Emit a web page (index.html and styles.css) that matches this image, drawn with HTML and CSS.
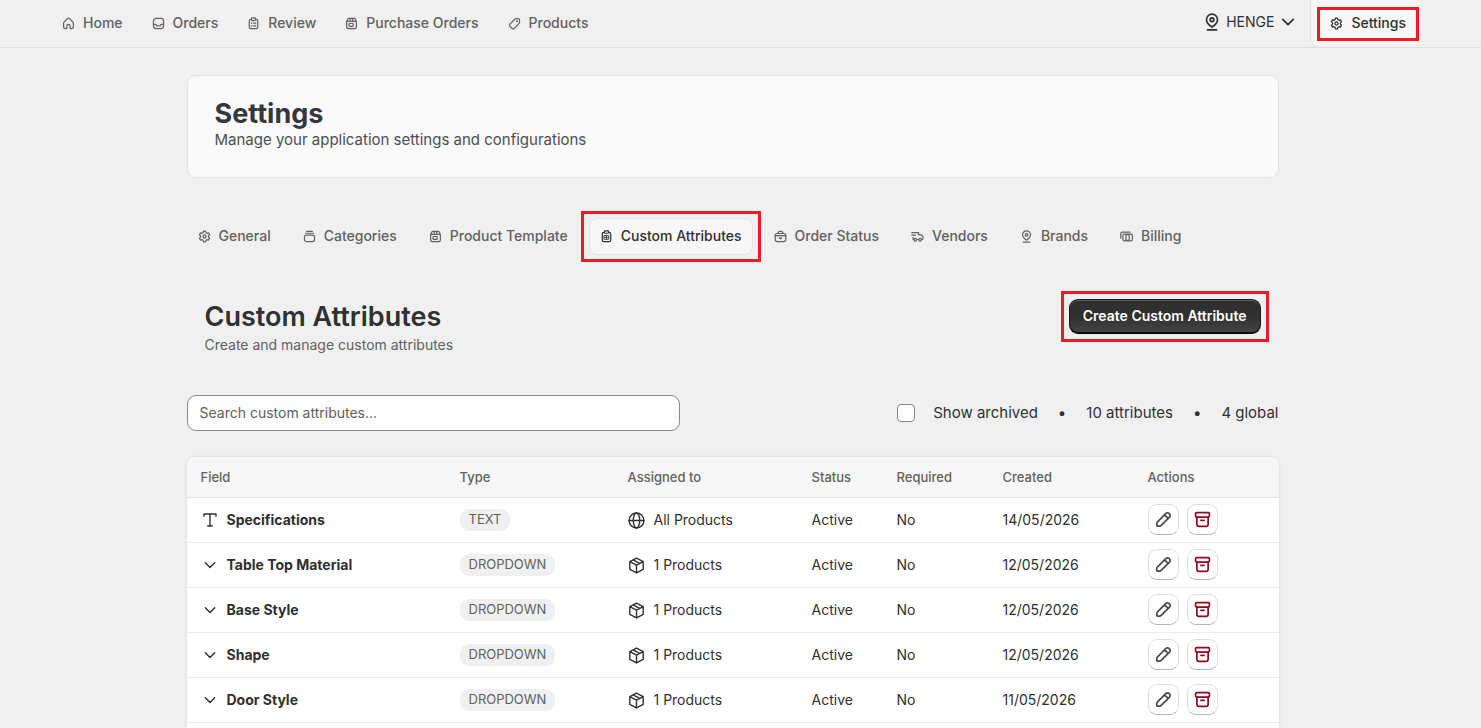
FILE: index.html
```html
<!DOCTYPE html>
<html lang="en">
<head>
  <meta charset="utf-8">
  <title>Settings</title>
  <link rel="stylesheet" href="styles.css">
</head>
<body>
  <svg class="sprite" aria-hidden="true">
    <symbol id="i-home" viewBox="0 0 16 16"><path d="M2 7.800c0-.8.3-1.500.9-2L6.700 2c.7-.7 1.900-.7 2.600 0l3.800 3.800c.6.5.9 1.200.9 2v4.400c0 1.100-.9 2-2 2h-1.200c-.5 0-.8-.3-.8-.8v-2.200a2 2 0 0 0-4 0v2.200c0 .5-.3.8-.8.8H4c-1.100 0-2-.9-2-2z"/></symbol>
    <symbol id="i-orders" viewBox="0 0 16 16"><rect x="1.800" y="1.800" width="12.400" height="12.400" rx="3"/><path d="M2 9h2.800l1.200 2h4l1.200-2H14"/></symbol>
    <symbol id="i-clip" viewBox="0 0 16 16"><path d="M5.500 2.800H4.800a2 2 0 0 0-2 2v7.400a2 2 0 0 0 2 2h6.400a2 2 0 0 0 2-2V4.800a2 2 0 0 0-2-2h-.7"/><rect x="5.500" y="1.200" width="5" height="3.200" rx="1"/><path d="M5.300 7.500h.8M5.300 10.800h.8M8 7.500h2.800M8 10.800h2.800"/></symbol>
    <symbol id="i-store" viewBox="0 0 16 16"><path d="M2 5.500v6.700a2 2 0 0 0 2 2h8a2 2 0 0 0 2-2V5.500l-1.300-2.700a1.800 1.800 0 0 0-1.600-1H4.900a1.800 1.800 0 0 0-1.600 1zM2 5.500h12M6.500 2v3.500M9.500 2v3.500"/><rect x="5" y="8" width="5" height="3.500" rx=".5"/></symbol>
    <symbol id="i-tag" viewBox="0 0 16 16"><path d="M8.600 2.500 2.400 8.700a1.800 1.800 0 0 0 0 2.500l2.900 2.900a1.800 1.800 0 0 0 2.500 0l5.800-6.200c.4-.4.6-.8.6-1.300V4a2 2 0 0 0-2-2H9.900c-.5 0-.9.200-1.300.5z"/><circle cx="11" cy="5.200" r=".5"/></symbol>
    <symbol id="i-gear" viewBox="0 0 16 16"><path d="M6.700 1.500h2.600l.5 1.900 1.200.7 1.900-.6 1.300 2.300-1.400 1.400v1.600l1.400 1.400-1.300 2.300-1.900-.6-1.200.7-.5 1.900H6.700l-.5-1.900-1.200-.7-1.900.6-1.300-2.300 1.400-1.400V7.200L1.800 5.800l1.300-2.300 1.900.6 1.200-.7z"/><circle cx="8" cy="8" r="1.900"/></symbol>
    <symbol id="i-stack" viewBox="0 0 16 16"><rect x="1.800" y="6.300" width="12.400" height="7.900" rx="2.500"/><path d="M3 4h10M4.500 1.800h7"/></symbol>
    <symbol id="i-list" viewBox="0 0 16 16"><path d="M5.500 2.800H4.800a2 2 0 0 0-2 2v7.400a2 2 0 0 0 2 2h6.400a2 2 0 0 0 2-2V4.800a2 2 0 0 0-2-2h-.7"/><rect x="5.500" y="1.200" width="5" height="2.800" rx="1"/><path stroke-width="1" d="M5.300 6.800h5.400v4.700H5.300zM8 6.800v4.700M5.300 9.100h5.400"/></symbol>
    <symbol id="i-case" viewBox="0 0 16 16"><rect x="1.500" y="4.300" width="13" height="9.900" rx="2.500"/><path d="M5 4.300c0-1.500 1.100-2.500 2.500-2.500h1c1.400 0 2.500 1 2.500 2.500M1.500 7h13M6.500 9.500 8 10.800l1.500-1.300"/></symbol>
    <symbol id="i-truck" viewBox="0 0 16 16"><path d="M1 3.300h8.300v2.400h2.500c.5 0 .9.200 1.200.6l1.700 2.200v2.300c0 .5-.4.900-.9.900h-.7M9 11.700H7.200M3.200 11.700H2.500V9.500M1 6.200h4.500"/><circle cx="5.200" cy="12" r="1.600"/><circle cx="11.200" cy="12" r="1.600"/></symbol>
    <symbol id="i-pin" viewBox="0 0 16 16"><path d="M8 12.500c2.500-1.700 4.900-4 4.900-6.600a4.900 4.900 0 0 0-9.800 0c0 2.600 2.400 4.900 4.900 6.600zM4 15h8"/><circle cx="8" cy="6" r="1.600"/></symbol>
    <symbol id="i-cash" viewBox="0 0 16 16"><rect x="3.500" y="5" width="11.700" height="8.500" rx="2"/><path d="M1 10V4.500a2 2 0 0 1 2-2h9.500"/><rect x="7.300" y="5.800" width="4" height="7" rx="1.500"/></symbol>
    <symbol id="i-down" viewBox="0 0 16 16"><path d="m3.300 5.700 4.700 4.700 4.700-4.700"/></symbol>
    <symbol id="i-text" viewBox="0 0 16 16"><path d="M2 4.200V2h12v2.200M8 2v12M5.700 14h4.600"/></symbol>
    <symbol id="i-globe" viewBox="0 0 16 16"><circle cx="8" cy="8" r="7"/><ellipse cx="8" cy="8" rx="3" ry="7"/><path d="M1 8h14"/></symbol>
    <symbol id="i-box" viewBox="0 0 16 16"><path d="M8 1 14.300 4.300v7.400L8 15l-6.300-3.300V4.300zM1.700 4.300 8 7.600l6.300-3.300M8 7.600V15M4.800 2.700l6.200 3.300"/></symbol>
    <symbol id="i-edit" viewBox="0 0 16 16"><path d="m2.400 10.200 7.900-7.900a2 2 0 0 1 2.900 0l.5.500a2 2 0 0 1 0 2.900l-7.900 7.900c-.4.400-.8.600-1.300.6H2.300a.6.600 0 0 1-.6-.6v-1.800c0-.6.200-1.200.7-1.600zM9 3.600 12.400 7"/></symbol>
    <symbol id="i-archive" viewBox="0 0 16 16"><rect x="1.500" y="1.500" width="13" height="4.200" rx=".9"/><path d="M2.700 5.700v6.800c0 1 .8 1.900 1.900 1.900h6.800c1.100 0 1.900-.9 1.900-1.900V5.700M6.500 8.800h3"/></symbol>
  </svg>

  <header class="topbar">
    <nav class="main-nav">
      <a href="#"><svg><use href="#i-home"/></svg>Home</a>
      <a href="#"><svg><use href="#i-orders"/></svg>Orders</a>
      <a href="#"><svg><use href="#i-clip"/></svg>Review</a>
      <a href="#"><svg><use href="#i-store"/></svg>Purchase Orders</a>
      <a href="#"><svg><use href="#i-tag"/></svg>Products</a>
    </nav>
    <button type="button" class="store-switch"><svg class="store-pin"><use href="#i-pin"/></svg>HENGE<svg class="store-arrow"><use href="#i-down"/></svg></button>
    <a href="#" class="settings-link marked"><svg><use href="#i-gear"/></svg>Settings</a>
  </header>

  <main class="page">
    <section class="banner">
      <h1>Settings</h1>
      <p>Manage your application settings and configurations</p>
    </section>

    <nav class="tabs">
      <a href="#"><svg><use href="#i-gear"/></svg>General</a>
      <a href="#"><svg><use href="#i-stack"/></svg>Categories</a>
      <a href="#"><svg><use href="#i-store"/></svg>Product Template</a>
      <a href="#" class="active marked"><svg><use href="#i-list"/></svg>Custom Attributes</a>
      <a href="#"><svg><use href="#i-case"/></svg>Order Status</a>
      <a href="#"><svg><use href="#i-truck"/></svg>Vendors</a>
      <a href="#"><svg><use href="#i-pin"/></svg>Brands</a>
      <a href="#"><svg><use href="#i-cash"/></svg>Billing</a>
    </nav>

    <section class="section-head">
      <div>
        <h2>Custom Attributes</h2>
        <p>Create and manage custom attributes</p>
      </div>
      <button type="button" class="create-btn marked">Create Custom Attribute</button>
    </section>

    <div class="filters">
      <input type="text" class="search" placeholder="Search custom attributes..." aria-label="Search custom attributes">
      <div class="summary">
        <label class="archived"><input type="checkbox">Show archived</label>
        <span>•</span>
        <span>10 attributes</span>
        <span>•</span>
        <span>4 global</span>
      </div>
    </div>

    <div class="card">
      <table>
        <colgroup>
          <col>
          <col class="col-type">
          <col class="col-assigned">
          <col class="col-status">
          <col class="col-required">
          <col class="col-created">
          <col class="col-actions">
        </colgroup>
        <thead>
          <tr><th>Field</th><th>Type</th><th>Assigned to</th><th>Status</th><th>Required</th><th>Created</th><th>Actions</th></tr>
        </thead>
        <tbody id="rows"></tbody>
      </table>
    </div>
  </main>
  <script src="script.js"></script>
</body>
</html>
```
FILE: styles.css
```css
* {
  box-sizing: border-box;
}

body {
  margin: 0;
  min-height: 100vh;
  display: flex;
  flex-direction: column;
  background: #f0f0f0;
  color: #303030;
  font-family: Inter, "Liberation Sans", sans-serif;
  font-size: 15px;
  line-height: 20px;
}

h1, h2, p {
  margin: 0;
}

a {
  color: inherit;
  text-decoration: none;
}

button, input {
  font: inherit;
  color: inherit;
}

svg {
  width: 13px;
  height: 13px;
  flex: none;
  fill: none;
  stroke: currentColor;
  stroke-width: 1.5;
  stroke-linecap: round;
  stroke-linejoin: round;
}

.sprite {
  position: absolute;
  width: 0;
  height: 0;
}

/* red frame round the highlighted controls */
.marked {
  position: relative;
}

.marked::after {
  content: "";
  position: absolute;
  inset: -9px;
  border: 3px solid #ed1c24;
  pointer-events: none;
}

/* top bar */
.topbar {
  display: flex;
  align-items: flex-start;
  height: 48px;
  padding: 0 62px;
  border-bottom: 1px solid #e0e0e0;
}

.main-nav {
  display: flex;
  gap: 29px;
  margin-right: auto;
}

.main-nav a, .tabs a, .settings-link {
  display: flex;
  align-items: center;
  gap: 8px;
  font-size: 14px;
  font-weight: 500;
  color: #616161;
}

.main-nav a, .settings-link {
  height: 46px;
}

.store-switch {
  display: flex;
  align-items: center;
  gap: 5px;
  height: 44px;
  padding: 0;
  margin-right: 13px;
  border: 0;
  background: none;
  font-size: 14px;
}

.store-pin {
  width: 18px;
  height: 18px;
}

.store-arrow {
  width: 18px;
  height: 18px;
}

.settings-link {
  padding: 0 13px 0 19px;
  border-left: 1px solid #e3e3e3;
  border-radius: 0 0 8px 8px;
  background: #f7f7f7;
  color: #303030;
}

.settings-link::after {
  inset: 7px 0 5px 6px;
}

/* page */
.page {
  flex: 1;
  display: flex;
  flex-direction: column;
  width: 100%;
  max-width: 1124px;
  margin: 0 auto;
  padding: 27px 24px 0 8px;
}

.banner {
  height: 103px;
  padding: 22px 27px;
  border: 1px solid #e3e3e3;
  border-radius: 9px;
  background: #fafafa;
  color: #4a4f55;
}

h1, h2 {
  font-size: 27px;
  line-height: 32px;
  font-weight: 700;
  color: #303030;
}

.banner h1 {
  color: #34383e;
}

.tabs {
  display: flex;
  gap: 10px;
  margin-top: 40px;
}

.tabs a {
  height: 37px;
  padding: 0 10px 1px;
  border: 1px solid transparent;
  border-radius: 8px;
}

.tabs .active {
  border-color: #e3e3e3;
  background: #f7f7f7;
  color: #303030;
}

.tabs .active::after {
  inset: -8px -9px;
}

.section-head {
  display: flex;
  justify-content: space-between;
  align-items: flex-start;
  margin-top: 44px;
  padding: 0 18px;
}

.section-head h2 {
  margin-top: 2px;
  font-weight: 600;
}

.section-head p {
  margin-top: 2px;
  font-size: 14px;
  color: #616161;
}

.create-btn {
  height: 35px;
  padding: 0 13px 2px;
  border: 1px solid #1a1a1a;
  border-bottom-color: #000;
  border-radius: 9px;
  background: linear-gradient(#303030 50%, #454545);
  box-shadow: inset 0 1px 0 #5e5e5e, inset 0 -1px 0 #111;
  color: #fff;
  font-size: 14px;
  font-weight: 600;
}

.filters {
  display: flex;
  justify-content: space-between;
  align-items: center;
  margin-top: 40px;
}

.search {
  width: 493px;
  height: 36px;
  padding: 0 12px 1px;
  border: 1px solid #8a8a8a;
  border-radius: 9px;
  background: #fdfdfd;
  font-size: 14px;
}

.search::placeholder {
  color: #616161;
  opacity: 1;
}

.summary {
  display: flex;
  align-items: center;
  gap: 20px;
}

.archived {
  display: flex;
  align-items: center;
  gap: 18px;
}

.archived input {
  appearance: none;
  width: 18px;
  height: 18px;
  margin: 0;
  border: 1px solid #8a8a8a;
  border-radius: 4px;
  background: #fdfdfd;
}

/* table */
.card {
  flex: 1;
  margin-top: 26px;
  border-radius: 8px 8px 0 0;
  background: #fff;
  box-shadow: 0 0 3px rgba(0, 0, 0, 0.12);
  overflow: hidden;
}

table {
  width: 100%;
  table-layout: fixed;
  border-collapse: separate;
  border-spacing: 0;
  font-size: 14px;
}

.col-type {
  width: 168px;
}

.col-assigned {
  width: 184px;
}

.col-status {
  width: 85px;
}

.col-required {
  width: 106px;
}

.col-created {
  width: 145px;
}

.col-actions {
  width: 145px;
}

th, td {
  height: 45px;
  padding: 0 0 0 14px;
  border-bottom: 1px solid #ebebeb;
  text-align: left;
}

th {
  height: 41px;
  border-color: #e3e3e3;
  background: #f7f7f7;
  color: #616161;
  font-size: 13px;
  font-weight: 500;
}

.cell {
  display: flex;
  align-items: center;
  gap: 9px;
}

.cell svg {
  width: 17px;
  height: 17px;
  stroke-width: 1.3;
}

.actions {
  gap: 8px;
  padding-bottom: 1px;
}

.field {
  font-weight: 700;
}

.field svg {
  width: 16px;
  height: 16px;
  margin-left: 1px;
  stroke-width: 1.4;
}

.badge {
  display: inline-block;
  height: 22px;
  padding: 0 9px;
  border-radius: 9px;
  background: #f0f0f0;
  color: #616161;
  font-size: 13px;
}

.icon-btn {
  display: flex;
  align-items: center;
  justify-content: center;
  width: 31px;
  height: 31px;
  padding: 0;
  border: 1px solid #dedede;
  border-bottom-color: #b5b5b5;
  border-radius: 9px;
  background: #fff;
  color: #4a4a4a;
}

.icon-btn svg {
  stroke-width: 1.6;
}

.danger {
  color: #8e0b21;
}
```
FILE: script.js
```js
var rows = [
  { name: 'Specifications', type: 'TEXT', assigned: 'All Products', created: '14/05/2026' },
  { name: 'Table Top Material', type: 'DROPDOWN', assigned: '1 Products', created: '12/05/2026' },
  { name: 'Base Style', type: 'DROPDOWN', assigned: '1 Products', created: '12/05/2026' },
  { name: 'Shape', type: 'DROPDOWN', assigned: '1 Products', created: '12/05/2026' },
  { name: 'Door Style', type: 'DROPDOWN', assigned: '1 Products', created: '11/05/2026' }
];

function icon(name) {
  return '<svg><use href="#i-' + name + '"/></svg>';
}

document.getElementById('rows').innerHTML = rows.map(function(row) {
  var isText = row.type === 'TEXT';
  return '<tr>' +
    '<td><div class="cell field">' + icon(isText ? 'text' : 'down') + row.name + '</div></td>' +
    '<td><span class="badge">' + row.type + '</span></td>' +
    '<td><div class="cell">' + icon(isText ? 'globe' : 'box') + row.assigned + '</div></td>' +
    '<td>Active</td>' +
    '<td>No</td>' +
    '<td>' + row.created + '</td>' +
    '<td><div class="cell actions">' +
    '<button type="button" class="icon-btn" aria-label="Edit">' + icon('edit') + '</button>' +
    '<button type="button" class="icon-btn danger" aria-label="Archive">' + icon('archive') + '</button>' +
    '</div></td>' +
    '</tr>';
}).join('');
```
